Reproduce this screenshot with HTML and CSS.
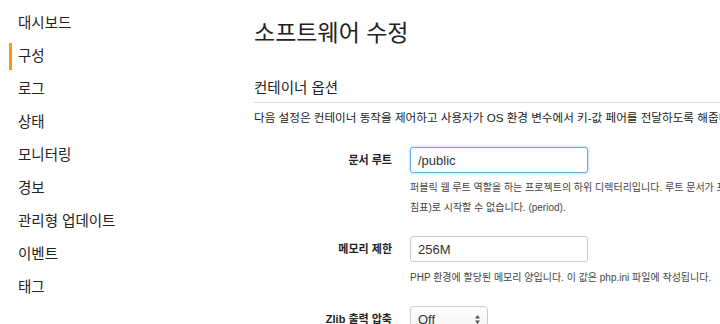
FILE: index.html
```html
<!DOCTYPE html>
<html lang="ko">
<head>
  <meta charset="UTF-8">
  <title>소프트웨어 수정</title>
  <link rel="stylesheet" href="styles.css">
</head>
<body>
  <nav class="sidebar">
    <ul>
      <li><a href="#">대시보드</a></li>
      <li class="active"><a href="#">구성</a></li>
      <li><a href="#">로그</a></li>
      <li><a href="#">상태</a></li>
      <li><a href="#">모니터링</a></li>
      <li><a href="#">경보</a></li>
      <li><a href="#">관리형 업데이트</a></li>
      <li><a href="#">이벤트</a></li>
      <li><a href="#">태그</a></li>
    </ul>
  </nav>

  <main class="content">
    <h1>소프트웨어 수정</h1>

    <h2>컨테이너 옵션</h2>
    <p class="intro">다음 설정은 컨테이너 동작을 제어하고 사용자가 OS 환경 변수에서 키-값 페어를 전달하도록 해줍니다.</p>

    <div class="field first">
      <label for="docroot">문서 루트</label>
      <div class="control">
        <input type="text" id="docroot" class="focused" value="/public">
        <p class="help">퍼블릭 웹 루트 역할을 하는 프로젝트의 하위 디렉터리입니다. 루트 문서가 프로젝트 루트인 경우 비워 둡니다. 이 값은 / (슬래시)로 시작해야 하며 . (마<br>침표)로 시작할 수 없습니다. (period).</p>
      </div>
    </div>

    <div class="field">
      <label for="memory">메모리 제한</label>
      <div class="control">
        <input type="text" id="memory" value="256M">
        <p class="help">PHP 환경에 할당된 메모리 양입니다. 이 값은 php.ini 파일에 작성됩니다.</p>
      </div>
    </div>

    <div class="field">
      <label>Zlib 출력 압축</label>
      <div class="control">
        <div class="select">
          <span>Off</span>
          <svg width="7" height="11" viewBox="0 0 7 11"><path d="M3.5 1 L6 4.5 H1 Z M3.5 10 L6 6.5 H1 Z" fill="#555"/></svg>
        </div>
      </div>
    </div>
  </main>
</body>
</html>
```

FILE: styles.css
```css
* { margin: 0; padding: 0; box-sizing: border-box; }
body {
  display: flex; width: 720px; height: 324px; overflow: hidden;
  background: #fff; color: #222;
  font-family: 'Liberation Sans', 'Noto Sans CJK KR', sans-serif;
}

.sidebar { width: 240px; flex-shrink: 0; padding-top: 7px; }
.sidebar ul { list-style: none; }
.sidebar li { height: 33px; padding-left: 9px; display: flex; align-items: center; }
.sidebar a {
  display: block; color: #222; text-decoration: none;
  font-size: 14.5px; line-height: 27px;
  border-left: 3px solid transparent; padding-left: 6px;
}
.sidebar li.active a { border-left-color: #f7981d; }

.content { flex: 1; min-width: 0; padding-left: 14px; padding-top: 18px; overflow: hidden; }
.content h1 { font-size: 23px; font-weight: normal; line-height: 30px; color: #222; }
.content h2 {
  margin-top: 30px; font-size: 14.5px; font-weight: normal; line-height: 20px; color: #222;
  padding-bottom: 4px; border-bottom: 1px solid #ddd;
}
.intro { margin-top: 6px; font-size: 11.6px; line-height: 18px; white-space: nowrap; color: #222; }

.field { display: flex; margin-top: 18px; }
.field.first { margin-top: 20px; }
.field label {
  width: 156px; flex-shrink: 0; padding-right: 18px; text-align: right;
  font-size: 11px; font-weight: bold; line-height: 26px; color: #222;
}
.control { flex: 1; min-width: 0; }
.control input {
  display: block; width: 178px; height: 26px; padding: 0 7px;
  font-family: 'Liberation Sans', sans-serif; font-size: 13px; color: #333;
  border: 1px solid #ccc; border-radius: 3px; outline: none;
}
.control input.focused { border-color: #66afe9; box-shadow: 0 0 3px rgba(102, 175, 233, 0.7); }
.help { margin-top: 5px; font-size: 10px; line-height: 20px; color: #444; white-space: nowrap; }
.field + .field .help { margin-top: 6px; }

.select {
  width: 78px; height: 26px; padding: 0 6px 0 7px;
  display: flex; align-items: center; justify-content: space-between;
  border: 1px solid #ccc; border-radius: 4px;
  background: linear-gradient(#fff, #f4f4f4);
  font-size: 13px; color: #333;
}
```
